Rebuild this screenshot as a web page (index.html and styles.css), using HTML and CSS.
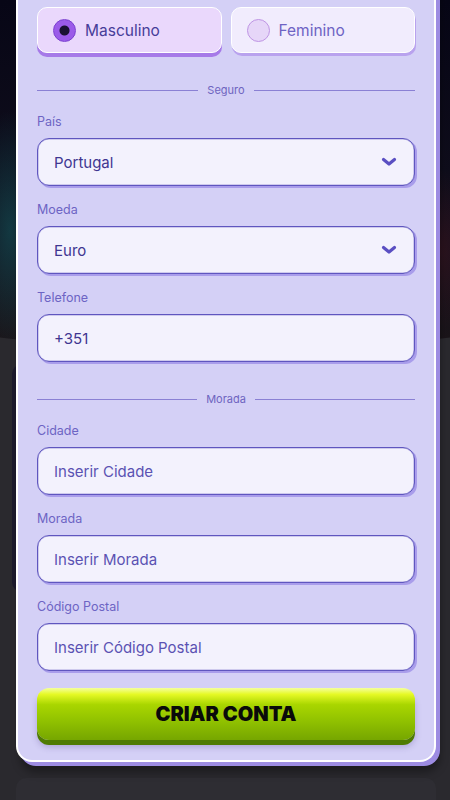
FILE: index.html
```html
<!DOCTYPE html>
<html lang="pt">
  <head>
    <meta charset="UTF-8" />
    <meta name="viewport" content="width=device-width, initial-scale=1.0" />
    <title>Criar conta</title>
    <link rel="stylesheet" href="styles.css">
  </head>
  <body>
    <div class="backdrop">
      <div class="hero"></div>
      <div class="behind"></div>
      <form class="card">
        <div class="genders">
          <label class="gender selected">
            <span class="radio"></span>
            Masculino
          </label>
          <label class="gender">
            <span class="radio"></span>
            Feminino
          </label>
        </div>

        <div class="divider"><span>Seguro</span></div>

        <div class="field">
          <div class="label">País</div>
          <div class="box select">
            <span class="value">Portugal</span>
            <svg class="chev" width="16" height="10" viewBox="0 0 16 10"><path d="M2.5 2.5 L8 7 L13.5 2.5" fill="none" stroke="#5a4fc2" stroke-width="3.2" stroke-linecap="round" stroke-linejoin="round"/></svg>
          </div>
        </div>
        <div class="field">
          <div class="label">Moeda</div>
          <div class="box select">
            <span class="value">Euro</span>
            <svg class="chev" width="16" height="10" viewBox="0 0 16 10"><path d="M2.5 2.5 L8 7 L13.5 2.5" fill="none" stroke="#5a4fc2" stroke-width="3.2" stroke-linecap="round" stroke-linejoin="round"/></svg>
          </div>
        </div>
        <div class="field">
          <div class="label">Telefone</div>
          <div class="box"><span class="value">+351</span></div>
        </div>

        <div class="divider"><span>Morada</span></div>

        <div class="field">
          <div class="label">Cidade</div>
          <div class="box"><span class="hint">Inserir Cidade</span></div>
        </div>
        <div class="field">
          <div class="label">Morada</div>
          <div class="box"><span class="hint">Inserir Morada</span></div>
        </div>
        <div class="field">
          <div class="label">Código Postal</div>
          <div class="box"><span class="hint">Inserir Código Postal</span></div>
        </div>

        <button type="button" class="submit">CRIAR CONTA</button>
      </form>
      <div class="next"></div>
    </div>
  </body>
</html>
```

FILE: styles.css
```css
body {
  margin: 0;
  background-color: #2a292e;
  font-family: Inter, "Liberation Sans", sans-serif;
  overflow: hidden;
}
.backdrop {
  position: relative;
  height: 800px;
  background-color: #2a292e;
  overflow: hidden;
}
.hero {
  position: absolute;
  left: -30px;
  right: -30px;
  top: 0;
  height: 348px;
  border-radius: 0 0 50% 50% / 0 0 20px 20px;
  background:
    radial-gradient(ellipse 40px 120px at 40px 230px, rgba(20, 90, 95, 0.55), transparent),
    radial-gradient(ellipse 40px 80px at 470px 250px, rgba(60, 20, 30, 0.6), transparent),
    linear-gradient(to bottom, #070616, #12101d 70%, #1b1519);
}
.behind {
  position: absolute;
  left: 12px;
  top: 364px;
  width: 40px;
  height: 228px;
  border-radius: 10px;
  background-color: #1c1a2c;
}
.card {
  position: relative;
  margin: -20px 14px 0 16px;
  padding: 27px 19px 20px 19px;
  background-color: #d4d0f6;
  border: 2px solid #ffffff;
  border-top: 0;
  border-radius: 0 0 16px 16px;
  box-shadow: 4px 4px 0 #9d8ce2, 4px 10px 8px rgba(0, 0, 0, 0.35);
}
.genders {
  display: flex;
  gap: 9px;
}
.gender {
  flex: 1;
  height: 44px;
  display: flex;
  align-items: center;
  gap: 9px;
  padding-left: 15px;
  border: 1px solid #ffffff;
  border-radius: 10px;
  background-color: #f1ecfd;
  box-shadow: 1px 3px 0 #b9a2ee;
  font-size: 15.5px;
  color: #6e63c4;
}
.gender.selected {
  background-color: #ead8fc;
  box-shadow: 0 4px 0 #a67ae8;
  color: #473d99;
}
.radio {
  width: 21px;
  height: 21px;
  border-radius: 50%;
  border: 1.5px solid #bf95e4;
  background-color: #e6d6f8;
}
.selected .radio {
  border-color: #7a3fd0;
  background: radial-gradient(circle, #1a1133 0 4.5px, #9b5be9 5.5px);
}
.divider {
  display: flex;
  align-items: center;
  gap: 9px;
  margin: 30px 0 17px 0;
  font-size: 11px;
  color: #6e64c0;
}
.divider::before,
.divider::after {
  content: "";
  flex: 1;
  height: 1px;
  background-color: #8a80d4;
}
.field {
  margin-bottom: 16px;
}
.label {
  height: 16px;
  line-height: 16px;
  margin-bottom: 8px;
  font-size: 12.5px;
  color: #6d64c4;
}
.box {
  height: 46px;
  display: flex;
  align-items: center;
  justify-content: space-between;
  padding: 0 16px;
  border: 1px solid #5f56bf;
  border-radius: 12px;
  background-color: #f3f2fd;
  box-shadow: inset 0 0 0 0.5px rgba(95, 86, 191, 0.5), 2px 2px 0 #a99deb;
  font-size: 15px;
}
.value {
  color: #3f3691;
}
.hint {
  color: #5b52b3;
}
.chev {
  margin-right: 1px;
}
.submit {
  display: block;
  width: 100%;
  height: 52px;
  margin-top: 17px;
  border: 0;
  border-radius: 12px;
  background: linear-gradient(to bottom, #f4ffa0 0, #e6f926 12%, #a9d600 32%, #93c400 60%, #76a600 100%);
  box-shadow: 0 5px 0 #4f7b02, 0 7px 6px rgba(60, 40, 120, 0.25);
  font-family: Inter, "Liberation Sans", sans-serif;
  font-weight: 900;
  font-size: 20px;
  color: #0a0a0a;
}
.next {
  margin: 16px 14px 0 16px;
  height: 40px;
  border-radius: 10px;
  background-color: #2e2d33;
}
```
